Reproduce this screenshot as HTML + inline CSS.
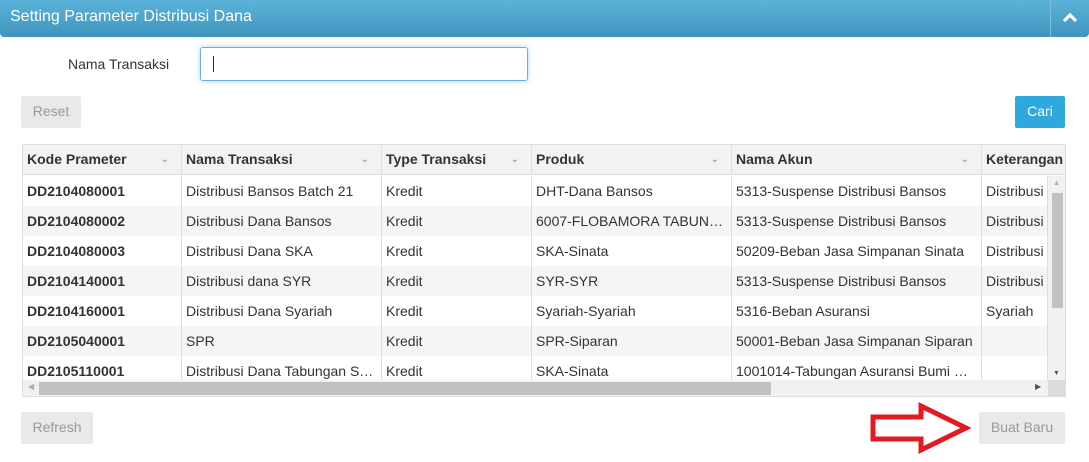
<!DOCTYPE html>
<html><head><style>
*{box-sizing:border-box;margin:0;padding:0}
body{width:1089px;height:462px;background:#fff;font-family:"Liberation Sans",sans-serif;font-size:14px;color:#333;position:relative;overflow:hidden}
.hdr{position:absolute;left:0;top:0;width:1089px;height:37px;background:linear-gradient(#5cb3d9,#3f94bd);border-radius:0 0 4px 4px;color:#fff;font-size:16px;line-height:34px;padding-left:10px}
.hdr .tog{position:absolute;right:0;top:0;width:39px;height:37px;border-left:1px solid #7fbedd;text-align:center}
.lbl{position:absolute;left:68px;top:56px;font-size:14px}
.inp{position:absolute;left:200px;top:47px;width:328px;height:34px;border:1px solid #66afe9;border-radius:3px;box-shadow:0 0 5px rgba(102,175,233,.6)}
.inp i{position:absolute;left:12px;top:8px;width:1px;height:16px;background:#333}
.btn{position:absolute;background:#e8e9ea;color:#999;font-size:14px;text-align:center;line-height:31px;height:32px;border-radius:2px}
.tbl{position:absolute;left:22px;top:144px;width:1044px;height:253px;border:1px solid #ddd;overflow:hidden}
.row{position:absolute;left:0;height:30px;width:1025px;line-height:30px}
.c{position:absolute;top:0;height:30px;padding-left:4px;white-space:nowrap;overflow:hidden;border-right:1px solid #ddd}
.h{background:#f2f2f2;font-weight:bold;border-bottom:1px solid #ddd;width:1044px}
.h .c{line-height:29px}
.h .c span{position:absolute;right:12px;top:0;font-weight:normal;font-size:10px;color:#888}
.b{font-weight:bold}
.vs{position:absolute;left:1025px;top:31px;width:17px;height:204px;background:#f1f1f1}
.hs{position:absolute;left:0;top:235px;width:1025px;height:17px;background:#f1f1f1}
</style></head><body>
<div class="hdr">Setting Parameter Distribusi Dana<div class="tog"><svg width="16" height="12" viewBox="0 0 16 12" style="margin-top:12px"><path d="M2 9 L8 3 L14 9" stroke="#fff" stroke-width="3.2" fill="none"/></svg></div></div>
<div class="lbl">Nama Transaksi</div>
<div class="inp"><i></i></div>
<div class="btn" style="left:21px;top:96px;width:60px">Reset</div>
<div class="btn" style="left:1015px;top:96px;width:50px;background:#2ea8dd;color:#fff">Cari</div>
<div class="tbl">
<div class="row h" style="top:0"><div class="c" style="left:0;width:159px">Kode Prameter<span>&#8964;</span></div><div class="c" style="left:159px;width:200px">Nama Transaksi<span>&#8964;</span></div><div class="c" style="left:359px;width:150px">Type Transaksi<span>&#8964;</span></div><div class="c" style="left:509px;width:200px">Produk<span>&#8964;</span></div><div class="c" style="left:709px;width:250px">Nama Akun<span>&#8964;</span></div><div class="c" style="left:959px;width:90px;border:0">Keterangan</div></div>
<div class="row" style="top:31px"><div class="c b" style="left:0;width:159px">DD2104080001</div><div class="c" style="left:159px;width:200px">Distribusi Bansos Batch 21</div><div class="c" style="left:359px;width:150px">Kredit</div><div class="c" style="left:509px;width:200px">DHT-Dana Bansos</div><div class="c" style="left:709px;width:250px">5313-Suspense Distribusi Bansos</div><div class="c" style="left:959px;width:66px">Distribusi</div></div>
<div class="row" style="top:61px;background:#f5f5f5"><div class="c b" style="left:0;width:159px">DD2104080002</div><div class="c" style="left:159px;width:200px">Distribusi Dana Bansos</div><div class="c" style="left:359px;width:150px">Kredit</div><div class="c" style="left:509px;width:200px">6007-FLOBAMORA TABUN…</div><div class="c" style="left:709px;width:250px">5313-Suspense Distribusi Bansos</div><div class="c" style="left:959px;width:66px">Distribusi</div></div>
<div class="row" style="top:91px"><div class="c b" style="left:0;width:159px">DD2104080003</div><div class="c" style="left:159px;width:200px">Distribusi Dana SKA</div><div class="c" style="left:359px;width:150px">Kredit</div><div class="c" style="left:509px;width:200px">SKA-Sinata</div><div class="c" style="left:709px;width:250px">50209-Beban Jasa Simpanan Sinata</div><div class="c" style="left:959px;width:66px">Distribusi</div></div>
<div class="row" style="top:121px;background:#f5f5f5"><div class="c b" style="left:0;width:159px">DD2104140001</div><div class="c" style="left:159px;width:200px">Distribusi dana SYR</div><div class="c" style="left:359px;width:150px">Kredit</div><div class="c" style="left:509px;width:200px">SYR-SYR</div><div class="c" style="left:709px;width:250px">5313-Suspense Distribusi Bansos</div><div class="c" style="left:959px;width:66px">Distribusi</div></div>
<div class="row" style="top:151px"><div class="c b" style="left:0;width:159px">DD2104160001</div><div class="c" style="left:159px;width:200px">Distribusi Dana Syariah</div><div class="c" style="left:359px;width:150px">Kredit</div><div class="c" style="left:509px;width:200px">Syariah-Syariah</div><div class="c" style="left:709px;width:250px">5316-Beban Asuransi</div><div class="c" style="left:959px;width:66px">Syariah</div></div>
<div class="row" style="top:181px;background:#f5f5f5"><div class="c b" style="left:0;width:159px">DD2105040001</div><div class="c" style="left:159px;width:200px">SPR</div><div class="c" style="left:359px;width:150px">Kredit</div><div class="c" style="left:509px;width:200px">SPR-Siparan</div><div class="c" style="left:709px;width:250px">50001-Beban Jasa Simpanan Siparan</div><div class="c" style="left:959px;width:66px"></div></div>
<div class="row" style="top:211px"><div class="c b" style="left:0;width:159px">DD2105110001</div><div class="c" style="left:159px;width:200px">Distribusi Dana Tabungan S…</div><div class="c" style="left:359px;width:150px">Kredit</div><div class="c" style="left:509px;width:200px">SKA-Sinata</div><div class="c" style="left:709px;width:250px">1001014-Tabungan Asuransi Bumi …</div><div class="c" style="left:959px;width:66px"></div></div>
<div class="vs"><div style="position:absolute;left:4px;top:17px;width:11px;height:115px;background:#c1c1c1"></div><div style="position:absolute;left:5px;top:4px;font-size:7px;color:#aaa">▲</div><div style="position:absolute;left:5px;bottom:3px;font-size:7px;color:#555">▼</div></div>
<div class="hs"><div style="position:absolute;left:16px;top:2px;width:732px;height:13px;background:#c1c1c1"></div><div style="position:absolute;left:5px;top:2px;font-size:8px;color:#aaa">◀</div><div style="position:absolute;left:1012px;top:2px;font-size:8px;color:#555">▶</div></div>
<div style="position:absolute;left:1025px;top:235px;width:17px;height:17px;background:#dcdcdc"></div>
</div>
<div class="btn" style="left:21px;top:412px;width:72px">Refresh</div>
<div class="btn" style="left:979px;top:412px;width:86px">Buat Baru</div>
<svg style="position:absolute;left:0;top:0" width="1089" height="462"><path d="M873 417 L921 417 L921 406 L966 428 L921 450 L921 439 L873 439 Z" fill="none" stroke="#e01b22" stroke-width="5" stroke-linejoin="miter"/></svg>
</body></html>
